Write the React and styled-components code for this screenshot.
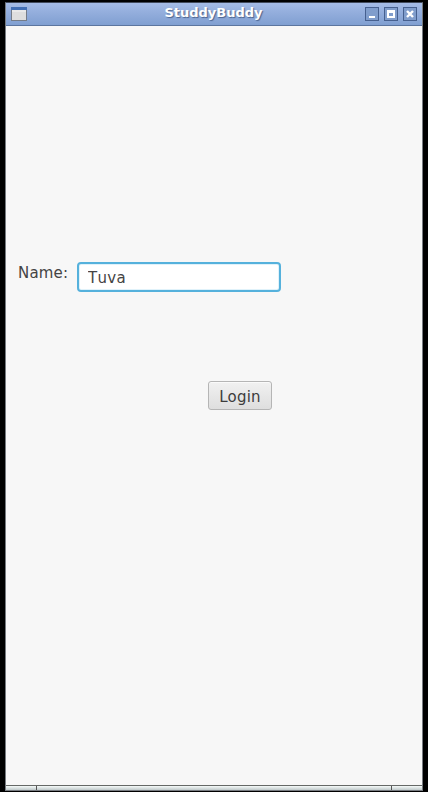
import React from "react";
import styled, { createGlobalStyle } from "styled-components";

const GlobalStyle = createGlobalStyle`
  * { box-sizing: border-box; }
  html, body { margin: 0; padding: 0; background: #000; }
  body { font-family: "DejaVu Sans", sans-serif; font-kerning: none; }
`;

const Desktop = styled.div`
  width: 428px;
  height: 792px;
  padding: 2px 5px 1px;
  background: #000;
  overflow: hidden;
`;

const Window = styled.div`
  width: 418px;
  height: 789px;
  display: flex;
  flex-direction: column;
  border: 1px solid #777b80;
  border-top-color: #414a5c;
  background: #f7f7f7;
`;

const TitleBar = styled.header`
  height: 23px;
  flex: none;
  display: grid;
  grid-template-columns: 60px 1fr 60px;
  align-items: center;
  padding: 0 5px 0 4px;
  background: linear-gradient(#a5bce6, #96b0de 35%, #809fd1);
  border-bottom: 1px solid #5b759f;
`;

const Title = styled.h1`
  margin: 0;
  padding-bottom: 2px;
  text-align: center;
  font-size: 13px;
  line-height: 18px;
  font-weight: 700;
  color: #fff;
  text-shadow: 1px 1px 1px #4b648f;
`;

const WindowIcon = styled.svg`
  display: block;
  width: 18px;
  height: 16px;
`;

const Controls = styled.div`
  display: flex;
  justify-content: flex-end;
  gap: 5px;
`;

const ControlButton = styled.button`
  width: 14px;
  height: 14px;
  padding: 0;
  border: 1px solid #46608f;
  background: #809dcc;

  svg { display: block; }
`;

const Content = styled.main`
  flex: 1;
  display: flex;
  flex-direction: column;
  align-items: flex-start;
  padding: 236px 0 0 12px;
`;

const Field = styled.label`
  display: flex;
  align-items: flex-start;
  gap: 9px;
  font-size: 15px;
  line-height: 20px;
  color: #444;
`;

const FieldName = styled.span`
  width: 50px;
  padding-top: 1px;
  letter-spacing: 0.2px;
  white-space: nowrap;
`;

const NameInput = styled.input`
  width: 204px;
  height: 30px;
  padding: 1px 9px 0;
  border: 2px solid #55b1dc;
  border-radius: 4px;
  outline: none;
  background: #fff;
  box-shadow: inset 0 0 0 1px #e0f2fa;
  font: 15px "DejaVu Sans", sans-serif;
  font-kerning: none;
  letter-spacing: 0.3px;
  color: #444;
`;

const LoginButton = styled.button`
  width: 64px;
  height: 29px;
  margin: 89px 0 0 190px;
  padding: 2px 0 0;
  border: 1px solid #b5b5b5;
  border-radius: 3px;
  background: linear-gradient(#f1f1f1, #dedede);
  box-shadow: inset 0 1px #fafafa;
  font: 15px "DejaVu Sans", sans-serif;
  letter-spacing: 0.2px;
  color: #3c3c3c;
`;

const ResizeBar = styled.footer`
  height: 5px;
  flex: none;
  display: grid;
  grid-template-columns: 30px 1fr 31px;
  border-top: 1px solid #656866;
`;

const Grip = styled.div`
  background: linear-gradient(#f5faf9, #bfc9ca);

  & + & { border-left: 1px solid #555; }
`;

export default function App() {
  return (
    <Desktop>
      <GlobalStyle />
      <Window>
        <TitleBar>
          <WindowIcon viewBox="0 0 18 16">
            <rect x="1.5" y="1.5" width="15" height="13" fill="#dedede" stroke="#747c88" />
            <path d="M1 1h16v3H1z" fill="#426fb5" />
            <path d="M2 5h14" stroke="#f4f4f4" />
          </WindowIcon>
          <Title>StuddyBuddy</Title>
          <Controls>
            <ControlButton aria-label="Minimize">
              <svg width="12" height="12">
                <path d="M3 8h6v2H3z" fill="#fff" />
              </svg>
            </ControlButton>
            <ControlButton aria-label="Maximize">
              <svg width="12" height="12">
                <path d="M2 2h8v8H2zM4 5v3h4V5z" fill="#fff" fillRule="evenodd" />
              </svg>
            </ControlButton>
            <ControlButton aria-label="Close">
              <svg width="12" height="12">
                <path d="M3 3l6 6M9 3L3 9" stroke="#fff" strokeWidth="2.4" />
              </svg>
            </ControlButton>
          </Controls>
        </TitleBar>
        <Content>
          <Field>
            <FieldName>Name:</FieldName>
            <NameInput defaultValue="Tuva" />
          </Field>
          <LoginButton>Login</LoginButton>
        </Content>
        <ResizeBar>
          <Grip />
          <Grip />
          <Grip />
        </ResizeBar>
      </Window>
    </Desktop>
  );
}
